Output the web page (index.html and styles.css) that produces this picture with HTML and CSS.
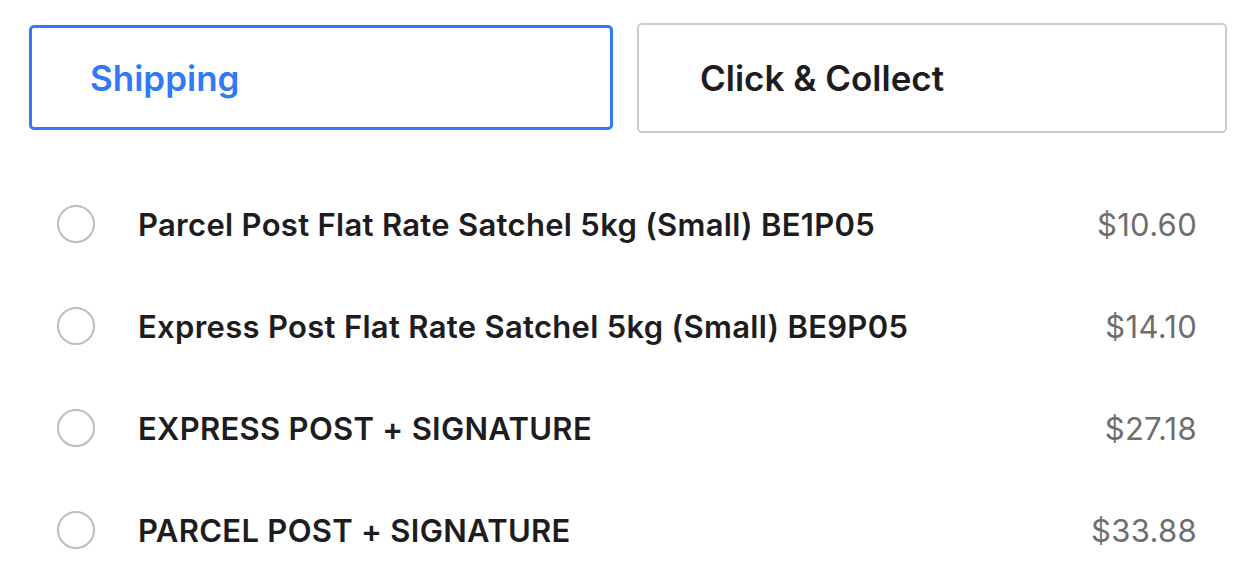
FILE: index.html
```html
<!DOCTYPE html>
<html>
<head>
  <meta charset="UTF-8">
  <meta name="viewport" content="width=device-width, initial-scale=1.0">
  <title>Delivery options</title>
  <link rel="stylesheet" href="styles.css">
</head>

<body>
  <div class="container">
    <div class="tabs">
      <div class="tab-slot">
        <button class="tab tab-active">Shipping</button>
      </div>
      <div class="tab-slot">
        <button class="tab">Click &amp; Collect</button>
      </div>
    </div>

    <ul class="rates">
      <li class="rate">
        <span class="radio"></span>
        <span class="rate-name">Parcel Post Flat Rate Satchel 5kg (Small) BE1P05</span>
        <span class="rate-price">$10.60</span>
      </li>
      <li class="rate">
        <span class="radio"></span>
        <span class="rate-name">Express Post Flat Rate Satchel 5kg (Small) BE9P05</span>
        <span class="rate-price">$14.10</span>
      </li>
      <li class="rate">
        <span class="radio"></span>
        <span class="rate-name">EXPRESS POST + SIGNATURE</span>
        <span class="rate-price">$27.18</span>
      </li>
      <li class="rate">
        <span class="radio"></span>
        <span class="rate-name">PARCEL POST + SIGNATURE</span>
        <span class="rate-price">$33.88</span>
      </li>
    </ul>
  </div>
</body>
</html>
```

FILE: styles.css
```css
body {
  font-family: Inter, "Liberation Sans", sans-serif;
  background-color: #ffffff;
  margin: 0;
  padding: 0;
}

.container {
  width: 1200px;
  padding: 23px 0 0 27px;
}

.tabs {
  display: flex;
  gap: 20px;
}

.tab-slot {
  flex: 1;
  height: 110px;
  display: flex;
}

.tab {
  flex: 1;
  display: flex;
  align-items: center;
  padding: 0 0 0 61px;
  font-family: inherit;
  font-size: 35px;
  font-weight: 600;
  color: #1d1d1f;
  background-color: #ffffff;
  border: 2px solid #cccccc;
  border-radius: 5px;
  cursor: pointer;
}

.tab-active {
  margin: 2px 4px 3px 2px;
  padding-left: 58px;
  border: 3px solid #3179f5;
  color: #3179f5;
}

.rates {
  list-style: none;
  margin: 40px 0 0 0;
  padding: 0 30px 0 30px;
}

.rate {
  display: flex;
  align-items: center;
  height: 102px;
  font-size: 31px;
  letter-spacing: 0.3px;
}

.radio {
  width: 34px;
  height: 34px;
  border: 2px solid #bdbdbd;
  border-radius: 50%;
  flex-shrink: 0;
}

.rate-name {
  margin-left: 43px;
  font-weight: 600;
  color: #1d1d1f;
}

.rate-price {
  margin-left: auto;
  color: #6e6e6e;
}
```
